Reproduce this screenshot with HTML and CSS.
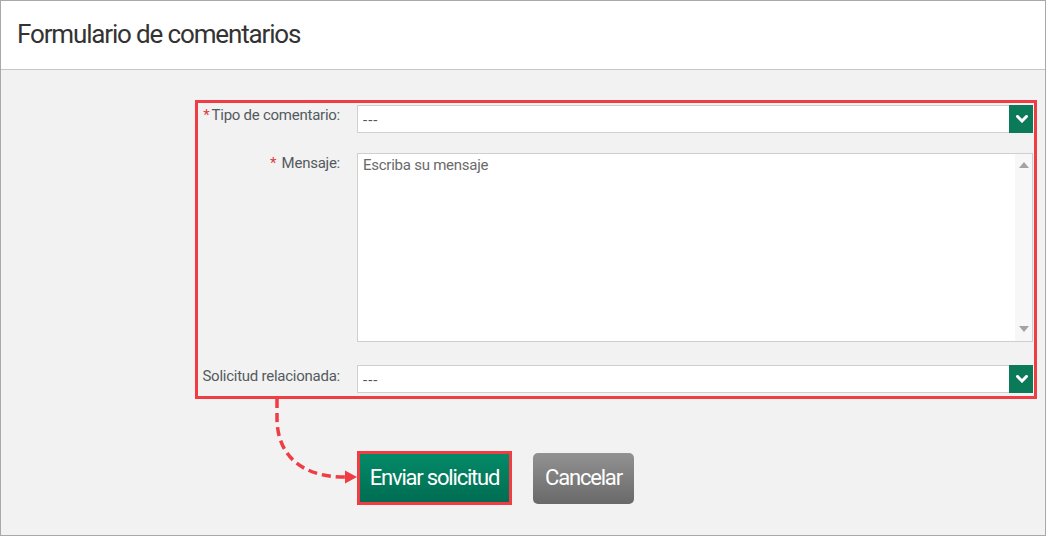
FILE: index.html
```html
<!DOCTYPE html>
<html lang="es">
<head>
<meta charset="utf-8">
<title>Formulario de comentarios</title>
<link rel="stylesheet" href="styles.css">
</head>
<body>
<div class="frame">
  <header class="header">
    <h1 class="title">Formulario de comentarios</h1>
  </header>
  <main class="content">
    <div class="form-box">
      <div class="row row-select1">
        <label class="label"><span class="req">*</span>Tipo de comentario:</label>
        <div class="select">
          <span class="select-value">---</span>
          <span class="select-btn">
            <svg width="12" height="8" viewBox="0 0 12 8"><path d="M1.5 1.5 L6 6 L10.5 1.5" fill="none" stroke="#fff" stroke-width="3" stroke-linecap="square"/></svg>
          </span>
        </div>
      </div>
      <div class="row row-textarea">
        <label class="label"><span class="req">*</span> Mensaje:</label>
        <div class="textarea">
          <span class="placeholder">Escriba su mensaje</span>
          <div class="scrollbar">
            <svg width="10" height="6" viewBox="0 0 10 6"><path d="M0 6 L5 0 L10 6 Z" fill="#a3a3a3"/></svg>
            <svg width="10" height="6" viewBox="0 0 10 6"><path d="M0 0 L5 6 L10 0 Z" fill="#a3a3a3"/></svg>
          </div>
        </div>
      </div>
      <div class="row row-select2">
        <label class="label">Solicitud relacionada:</label>
        <div class="select">
          <span class="select-value">---</span>
          <span class="select-btn">
            <svg width="12" height="8" viewBox="0 0 12 8"><path d="M1.5 1.5 L6 6 L10.5 1.5" fill="none" stroke="#fff" stroke-width="3" stroke-linecap="square"/></svg>
          </span>
        </div>
      </div>
    </div>
    <div class="actions">
      <button class="btn btn-primary" type="button">Enviar solicitud</button>
      <button class="btn btn-cancel" type="button">Cancelar</button>
    </div>
    <svg class="arrow" width="170" height="90" viewBox="0 0 170 90">
      <path d="M81 1 L81 20 C81 56 104 79 149 79" fill="none" stroke="#ef3d43" stroke-width="3.5" stroke-dasharray="9 5"/>
      <path d="M161 79 L149 72.5 L149 85.5 Z" fill="#ef3d43"/>
    </svg>
  </main>
</div>
</body>
</html>
```

FILE: styles.css
```css
* { box-sizing: border-box; }
html, body { margin: 0; padding: 0; background: #fff; }
body { font-family: Roboto, "Liberation Sans", sans-serif; }

.frame {
  width: 1046px;
  height: 536px;
  border: 1px solid #a8a8a8;
  background: #f1f2f1;
  display: flex;
  flex-direction: column;
  position: relative;
}

.header {
  height: 69px;
  background: #fff;
  border-bottom: 1px solid #c6c6c6;
  padding-left: 16px;
  display: flex;
  align-items: center;
}
.title {
  margin: 0;
  font-weight: 400;
  font-size: 26px;
  letter-spacing: -1.15px;
  color: #333;
  padding-bottom: 2px;
}

.content {
  flex: 1;
  padding: 30px 0 0 194px;
  position: relative;
}

.form-box {
  width: 842px;
  border: 3px solid #ef3d43;
  padding: 2px 0 3px 0;
  display: flex;
  flex-direction: column;
}

.row {
  display: flex;
  gap: 17px;
}
.row-textarea { margin-top: 20px; }
.row-select2 { margin-top: 23px; }

.label {
  width: 142px;
  flex: none;
  text-align: right;
  font-size: 15px;
  letter-spacing: -0.25px;
  color: #555a5e;
  padding-top: 1px;
  white-space: nowrap;
}
.row-textarea .label { padding-top: 1px; }
.row-select2 .label { padding-top: 2px; }
.req {
  color: #e03a40;
  margin-right: 2px;
}

.select {
  width: 676px;
  height: 28px;
  background: #fff;
  border: 1px solid #cfcfcf;
  display: flex;
  align-items: center;
  position: relative;
}
.select-value {
  flex: 1;
  padding: 2px 0 0 5px;
  font-size: 15px;
  letter-spacing: 1px;
  color: #555;
}
.select-btn {
  width: 24px;
  align-self: stretch;
  margin: -1px -1px -1px 0;
  background: #0b7a58;
  display: flex;
  align-items: center;
  justify-content: center;
  padding-left: 1px;
}

.textarea {
  width: 676px;
  height: 189px;
  background: #fff;
  border: 1px solid #cfcfcf;
  display: flex;
}
.placeholder {
  flex: 1;
  padding: 2px 0 0 5px;
  font-size: 15px;
  letter-spacing: -0.25px;
  color: #6a6a6a;
}
.scrollbar {
  width: 17px;
  background: #f7f7f7;
  display: flex;
  flex-direction: column;
  justify-content: space-between;
  align-items: center;
  padding: 8px 0 9px 1px;
}

.actions {
  display: flex;
  align-items: center;
  gap: 21px;
  margin: 52px 0 0 162px;
}
.btn {
  font-family: Roboto, "Liberation Sans", sans-serif;
  font-size: 22px;
  letter-spacing: -1.2px;
  color: #fff;
  cursor: pointer;
}
.btn-primary {
  width: 155px;
  height: 54px;
  border: 3px solid #ef3d43;
  background: linear-gradient(#048a68, #006d52);
  padding: 0 0 2px 0;
}
.btn-cancel {
  width: 101px;
  height: 51px;
  border: none;
  border-radius: 5px;
  background: linear-gradient(#929292, #696969);
  padding: 0 0 2px 0;
}

.arrow {
  position: absolute;
  left: 195px;
  top: 328px;
  overflow: visible;
}
```
